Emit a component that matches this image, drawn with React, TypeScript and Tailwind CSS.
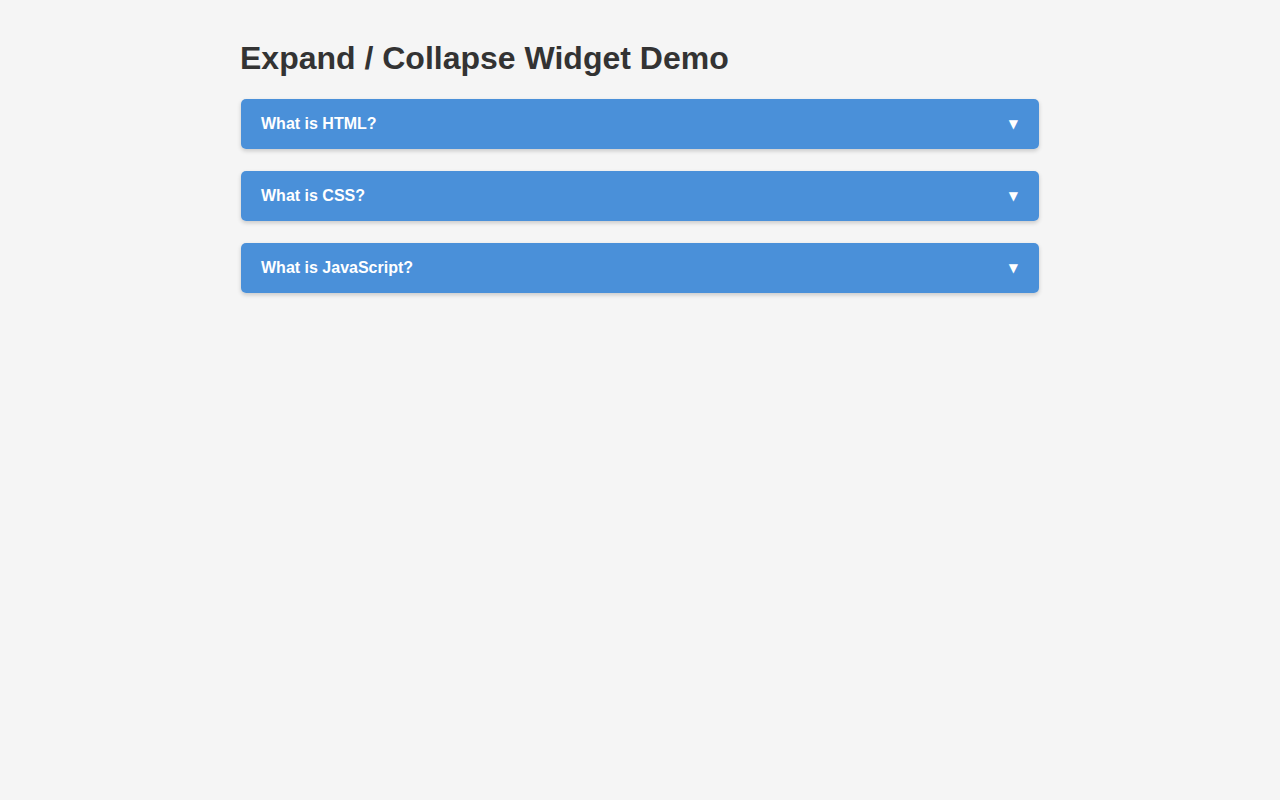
import { useState } from 'react';

const items = [
  { q: 'What is HTML?', a: 'HTML is the standard markup language for creating web pages.' },
  { q: 'What is CSS?', a: 'CSS describes how HTML elements are to be displayed on screen.' },
  { q: 'What is JavaScript?', a: 'JavaScript is the programming language of the web.' },
];

export default function App() {
  const [open, setOpen] = useState<number | null>(null);

  return (
    <div className="min-h-screen bg-[#f5f5f5] font-['Liberation_Sans',Arial,sans-serif] text-[#333]">
      <div className="w-[800px] mx-auto pt-10">
        <h1 className="text-[32px] font-bold leading-[37px] mb-[22px]">Expand / Collapse Widget Demo</h1>

        <div className="flex flex-col gap-[22px]">
          {items.map((it, i) => (
            <div key={it.q} className="mx-px rounded-[5px] shadow-[0_2px_4px_rgba(0,0,0,0.18)] overflow-hidden">
              <button
                onClick={() => setOpen(open === i ? null : i)}
                className="w-full h-[50px] flex items-center justify-between px-5 bg-[#4a90d9] text-white text-base font-bold text-left cursor-pointer"
              >
                <span>{it.q}</span>
                <span className="text-[12px] font-['DejaVu_Sans',sans-serif] pr-px -mt-px">▼</span>
              </button>
              {open === i && (
                <div className="bg-white px-5 py-4 text-[15px]">{it.a}</div>
              )}
            </div>
          ))}
        </div>
      </div>
    </div>
  );
}
